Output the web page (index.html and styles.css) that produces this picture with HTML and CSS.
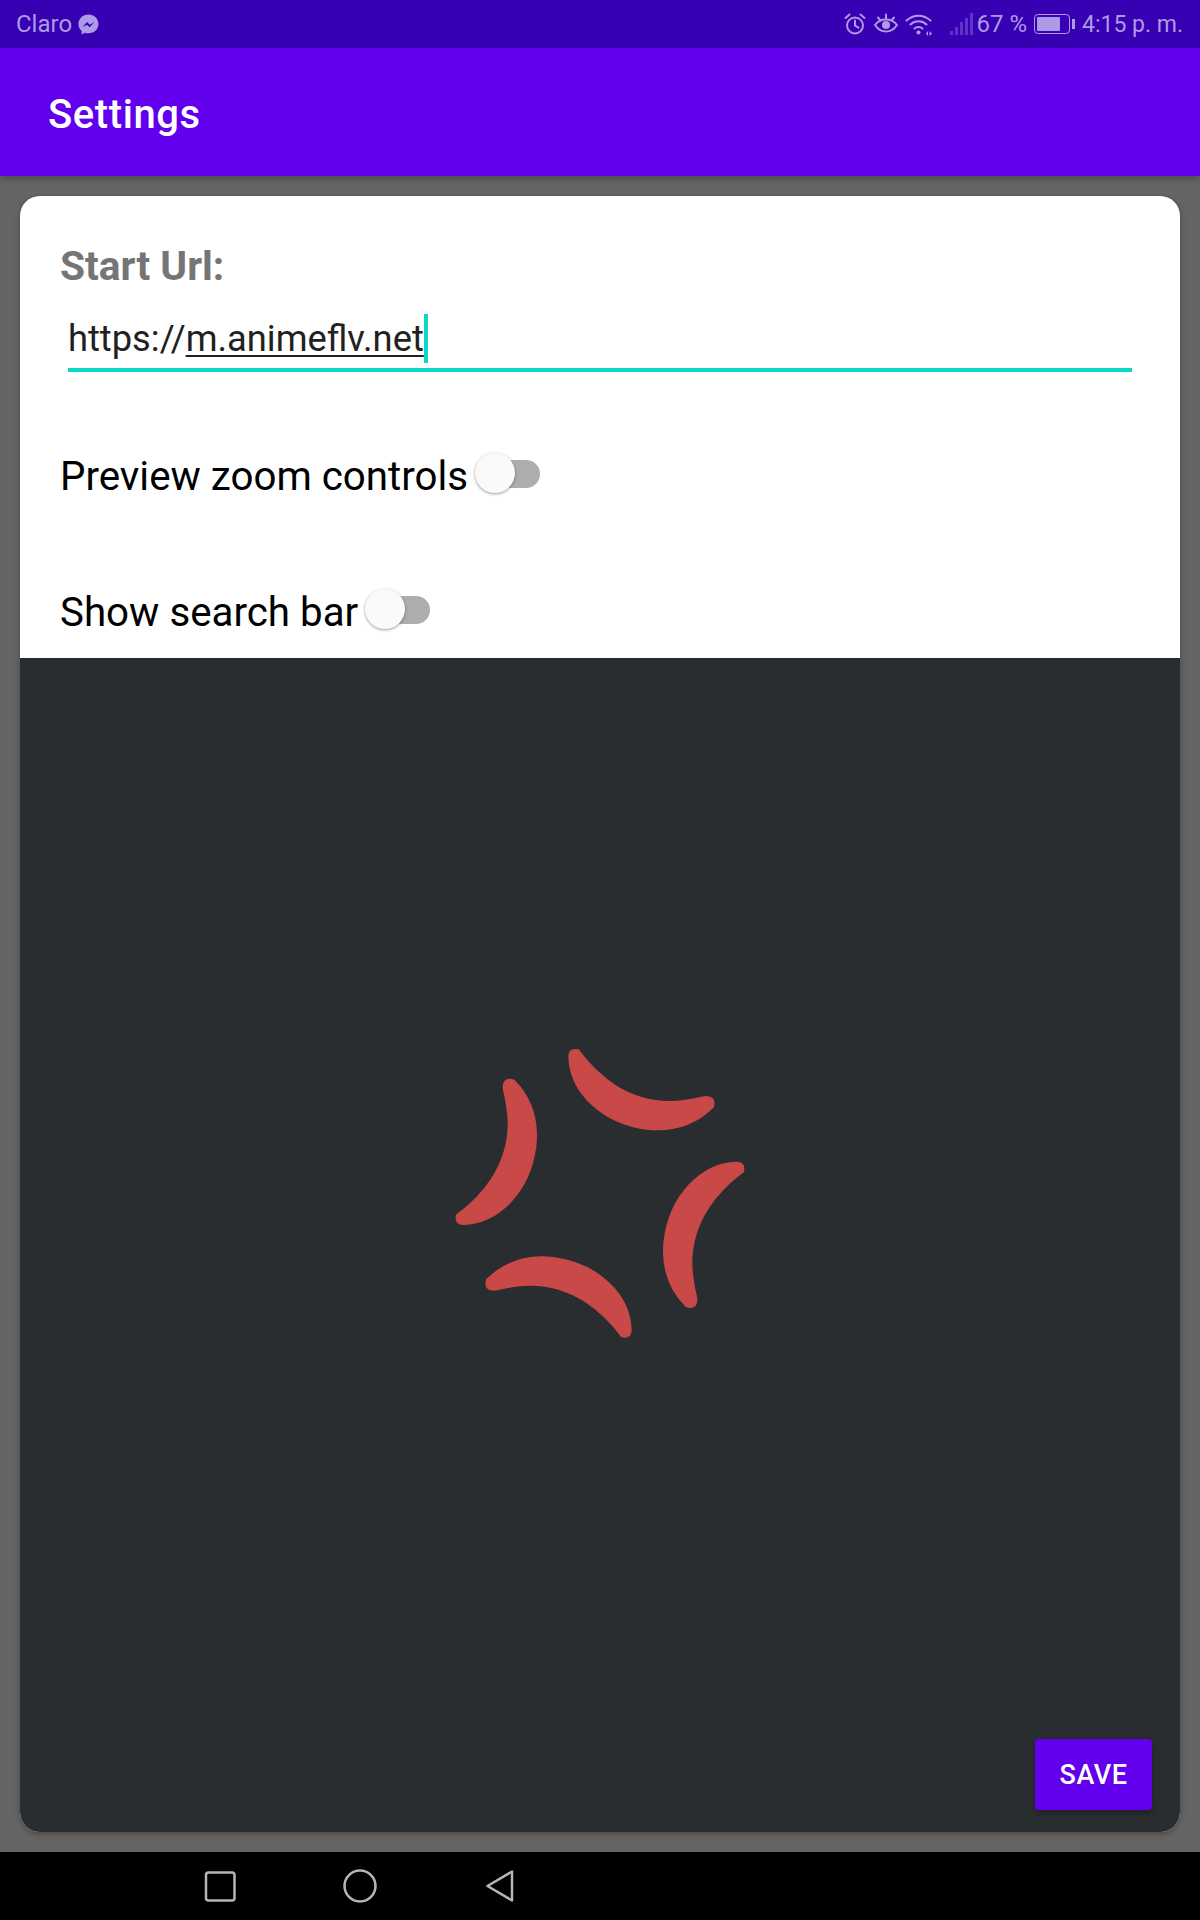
FILE: index.html
```html
<!DOCTYPE html>
<html lang="en">
<head>
  <meta charset="UTF-8" />
  <meta name="viewport" content="width=device-width, initial-scale=1.0"/>
  <title>Settings</title>
  <link rel="stylesheet" href="styles.css">
</head>
<body>

<div class="status-bar">
  <div class="status-left">
    <span>Claro</span>
    <svg class="ic-messenger" viewBox="0 0 22 22" width="21" height="21">
      <path class="fill" d="M11 .5C5 .5.5 4.900.5 10.500c0 3 1.200 5.500 3.300 7.300v3.700l3.400-1.900c1.200.4 2.500.6 3.800.6 6 0 10.500-4.400 10.500-9.700S17 .5 11 .5z"/>
      <path class="cut" d="M4.500 14l5-5.600 2.800 2.800 4.900-2.800-5 5.600-2.800-2.800z"/>
    </svg>
  </div>
  <div class="status-right">
    <svg viewBox="0 0 24 24" width="24" height="24" class="ic-line">
      <circle cx="12" cy="13.500" r="8"/>
      <path d="M12 8.500v5.200l3.500 2M2.500 6l4-3.500M21.500 6l-4-3.500"/>
    </svg>
    <svg viewBox="0 0 26 24" width="26" height="24" class="ic-line">
      <path d="M2 13c3-4 7-5.500 11-5.500S21 9 24 13c-3 4.500-7 6.500-11 6.500S5 17.500 2 13z"/>
      <circle class="solid" cx="13" cy="13" r="4"/>
      <path d="M5 5.500l2.500 3M13 2.500v4M21 5.500l-2.500 3"/>
    </svg>
    <svg viewBox="0 0 28 24" width="28" height="24" class="ic-line">
      <path d="M1.500 8.500c7-6.500 17-6.500 24 0M5.500 12.500c4.500-4.200 11.500-4.200 16 0M9.500 16.500c2.200-2 5.800-2 8 0"/>
      <circle class="solid" cx="13.500" cy="20.500" r="2"/>
      <path class="solid thin" d="M21 21.500l2-2.500v5zM24.500 19l2.500 2.500-2.500 2.500z"/>
    </svg>
    <svg class="ic-signal" viewBox="0 0 24 24" width="24" height="24">
      <rect x="0" y="19" width="3" height="4"/>
      <rect x="5" y="15" width="3" height="8"/>
      <rect x="10" y="10" width="3" height="13"/>
      <rect x="15" y="6" width="3" height="17"/>
      <rect x="20" y="1" width="3" height="22"/>
    </svg>
    <span class="pct">67 %</span>
    <div class="battery"><div class="battery-level" style="width:76%"></div></div>
    <div class="battery-tip"></div>
    <span class="clock">4:15 p. m.</span>
  </div>
</div>

<div class="app-bar">Settings</div>

<div class="content">
  <div class="card">
    <div class="form-part">
      <div class="field-label">Start Url:</div>
      <div class="url-input">
        <span>https://</span><span class="composing">m.animeflv.net</span><span class="caret"></span>
      </div>
      <div class="switch-row">
        <span>Preview zoom controls</span>
        <div class="switch"><div class="track"></div><div class="thumb"></div></div>
      </div>
      <div class="switch-row">
        <span>Show search bar</span>
        <div class="switch"><div class="track"></div><div class="thumb"></div></div>
      </div>
    </div>
    <div class="dark-part">
      <svg class="emblem" viewBox="0 0 1020 1020" width="340" height="340">
        <defs>
          <path id="crescent" d="M417 80Q418 54 445 60C500 135 590 215 720 215C755 215 790 208 826 200Q860 200 849 232C790 290 720 305 650 297C520 280 420 190 417 80Z"/>
        </defs>
        <use href="#crescent"/>
        <use href="#crescent" transform="rotate(90 510 490)"/>
        <use href="#crescent" transform="rotate(180 510 490)"/>
        <use href="#crescent" transform="rotate(270 510 490)"/>
      </svg>
      <button class="save-btn">SAVE</button>
    </div>
  </div>
</div>

<div class="nav-bar">
  <svg viewBox="0 0 400 68" width="400" height="68">
    <rect x="56" y="20.500" width="28.500" height="28" rx="2.500"/>
    <circle cx="210" cy="34" r="15.500"/>
    <path d="M362 19.500v29L337.500 34z"/>
  </svg>
</div>

</body>
</html>
```

FILE: styles.css
```css
* { box-sizing: border-box; }

body {
  margin: 0;
  height: 1920px;
  display: flex;
  flex-direction: column;
  font-family: Roboto, sans-serif;
  background: #666563;
  overflow: hidden;
}

/* status bar */
.status-bar {
  height: 48px;
  flex: none;
  background: #3700b3;
  color: #af9ae6;
  font-size: 24px;
  display: flex;
  justify-content: space-between;
  align-items: center;
  padding: 0 17px 0 16px;
}
.status-left, .status-right {
  display: flex;
  align-items: center;
}
.ic-messenger { margin-left: 6px; margin-top: 1px; }
.ic-messenger .fill { fill: #af9ae6; }
.ic-messenger .cut { fill: #3700b3; }
.ic-line { margin-right: 6px; fill: none; stroke: #af9ae6; stroke-width: 2; stroke-linecap: round; }
.ic-line .solid { fill: #af9ae6; stroke: none; }
.ic-signal { margin-left: 11px; fill: #5c33c4; }
.pct { margin-left: 3px; }
.battery {
  width: 36px;
  height: 20px;
  margin-left: 7px;
  border: 1.500px solid #af9ae6;
  border-radius: 4px;
  padding: 2px;
}
.battery-level { height: 100%; background: #af9ae6; border-radius: 1px; }
.battery-tip { width: 3px; height: 10px; margin-left: 2px; background: #af9ae6; }
.clock { margin-left: 7px; font-size: 23px; }

/* app bar */
.app-bar {
  height: 128px;
  flex: none;
  background: #6200ee;
  color: #fff;
  font-size: 40px;
  font-weight: 500;
  letter-spacing: 0.6px;
  padding: 47px 48px 0;
  line-height: 40px;
  box-shadow: 0 3px 6px rgba(0,0,0,0.25);
  position: relative;
}

/* card */
.content {
  flex: 1;
  padding: 20px 20px;
  display: flex;
  min-height: 0;
}
.card {
  flex: 1;
  background: #fff;
  border-radius: 20px;
  overflow: hidden;
  display: flex;
  flex-direction: column;
  box-shadow: 0 2px 6px rgba(0,0,0,0.3);
}
.form-part {
  height: 462px;
  flex: none;
  padding: 0 40px;
  overflow: hidden;
}
.field-label {
  margin-top: 48px;
  height: 44px;
  line-height: 44px;
  font-size: 40.700px;
  font-weight: 700;
  color: #757575;
}
.url-input {
  margin: 10px 8px 56px;
  height: 74px;
  padding-top: 16px;
  line-height: 50px;
  font-size: 36.300px;
  color: #212121;
  border-bottom: 4px solid #0cd6c4;
  white-space: nowrap;
}
.composing {
  text-decoration: underline;
  text-decoration-thickness: 2px;
  text-underline-offset: 4px;
}
.caret {
  display: inline-block;
  width: 4px;
  height: 49px;
  background: #0cd6c4;
  vertical-align: -12px;
}
.switch-row {
  margin-top: 40px;
  height: 96px;
  display: flex;
  align-items: center;
  gap: 7px;
  font-size: 40.300px;
  color: #000;
}
.switch {
  position: relative;
  width: 65px;
  height: 40px;
  top: -3px;
}
.track {
  margin: 7px 0 0 4px;
  height: 28px;
  background: #adadad;
  border-radius: 14px;
}
.thumb {
  position: absolute;
  left: 0;
  top: 0;
  width: 40px;
  height: 40px;
  border-radius: 50%;
  background: #fafafa;
  box-shadow: 0 1px 3px rgba(0,0,0,0.4);
}

.dark-part {
  flex: 1;
  background: #2a2d30;
  position: relative;
  display: flex;
  align-items: center;
  justify-content: center;
  padding-bottom: 90px;
}
.emblem { fill: #c94848; stroke: #c94848; stroke-width: 4; }
.save-btn {
  position: absolute;
  right: 28px;
  bottom: 22px;
  width: 117px;
  height: 71px;
  background: #6200ee;
  color: #fff;
  border: 0;
  border-radius: 4px;
  font-family: Roboto, sans-serif;
  font-size: 27px;
  font-weight: 500;
  letter-spacing: 0.5px;
  box-shadow: 0 3px 6px rgba(0,0,0,0.3);
}

/* nav */
.nav-bar {
  height: 68px;
  flex: none;
  background: #000;
  padding-left: 150px;
}
.nav-bar svg {
  display: block;
  fill: none;
  stroke: #b5b5b5;
  stroke-width: 2.500;
  stroke-linejoin: round;
}
```
